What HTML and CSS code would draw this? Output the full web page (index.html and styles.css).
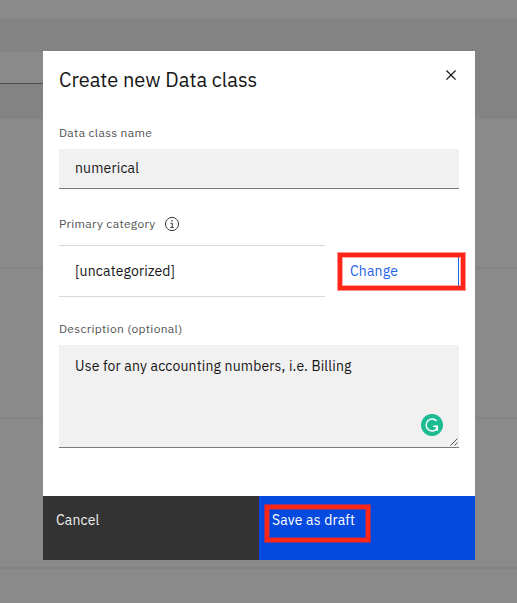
FILE: index.html
```
<!DOCTYPE html>
<html lang="en">
<head>
<meta charset="utf-8">
<title>Create new Data class</title>
<link rel="stylesheet" href="styles.css">
</head>
<body>
<div class="backdrop">
  <div class="toolbar"><div class="search"></div></div>
  <div class="row"></div>
  <div class="row"></div>
  <div class="row"></div>
</div>
<main class="modal">
  <header class="header">
    <h1 class="title">Create new Data class</h1>
    <svg class="close" viewBox="0 0 32 32"><path d="M24 9.4L22.6 8 16 14.6 9.4 8 8 9.4l6.6 6.6L8 22.6 9.4 24l6.6-6.6 6.6 6.6 1.4-1.4-6.6-6.6z"/></svg>
  </header>
  <div class="label label-name"><span>Data class name</span></div>
  <div class="input"><span class="name-value">numerical</span></div>
  <div class="label label-category"><span>Primary category</span>
    <svg class="info" viewBox="0 0 16 16"><circle cx="8" cy="8" r="6.6" fill="none" stroke="#393939" stroke-width="1"/><path d="M6.4 7.2H8.3V11.3M6.1 11.4H9.9" fill="none" stroke="#393939" stroke-width="1"/><circle cx="8" cy="4.8" r=".8" fill="#393939"/></svg>
  </div>
  <div class="category">
    <div class="category-value"><span>[uncategorized]</span></div>
    <div class="change"><span>Change</span><i class="mark mark-change"></i></div>
  </div>
  <div class="label label-desc"><span>Description (optional)</span></div>
  <div class="textarea"><span>Use for any accounting numbers, i.e. Billing</span>
    <svg class="assistant" viewBox="0 0 22 22"><circle cx="11" cy="11" r="11" fill="#1dbb92"/><path d="M15.6 7A6 6 0 1 0 15.6 15M12 12.2H16.3V16.8" fill="none" stroke="#fff" stroke-width="1.5"/><path d="M13.2 12H17v4.2z" fill="#fff"/></svg>
    <svg class="grip" viewBox="0 0 8 8"><path d="M.5 7.5l7-7M4.5 7.5l3-3" stroke="#444" stroke-width=".9"/></svg>
  </div>
  <footer class="footer">
    <div class="button cancel"><span>Cancel</span></div>
    <div class="button save"><span>Save as draft</span><i class="mark mark-save"></i></div>
  </footer>
</main>
</body>
</html>
```
FILE: styles.css
```
* { box-sizing: border-box; }
body {
  margin: 0;
  width: 517px;
  height: 603px;
  overflow: hidden;
  display: grid;
  background: #8a8a8a;
  font: 14px/18px "IBM Plex Sans", Roboto, "Liberation Sans", sans-serif;
  letter-spacing: .16px;
  color: #161616;
}
.backdrop, .modal { grid-area: 1 / 1; }
.backdrop { padding-top: 18px; }
.toolbar { height: 101px; padding-top: 34px; background: #838383; }
.search { width: 50px; height: 32px; background: #8a8a8a; border-bottom: 1px solid #4d4d4d; }
.row { height: 150px; border-bottom: 2px solid #848484; }
.modal {
  display: flex;
  flex-direction: column;
  width: 432px;
  height: 509px;
  margin: 51px 0 0 43px;
  background: #fff;
}
.header { display: flex; justify-content: space-between; height: 73px; padding: 14px 14px 0 16px; }
.title { margin: 0; font-size: 20px; line-height: 30px; font-weight: 400; letter-spacing: 0; }
.close { width: 20px; height: 20px; fill: #161616; }
.label { display: flex; align-items: center; height: 16px; margin-left: 16px; font-size: 12px; line-height: 16px; letter-spacing: .32px; color: #525252; }
.label-name { padding-top: 1px; }
.input { height: 40px; margin: 9px 16px 0; padding: 10px 16px; background: #f1f1f1; border-bottom: 1px solid #7b7b7b; }
.label-category { margin-top: 27px; gap: 8px; }
.info { width: 16px; height: 16px; }
.category { display: flex; align-items: center; justify-content: space-between; height: 52px; margin: 13px 16px 0; }
.category-value { width: 266px; height: 52px; padding: 16px; border: solid #d8d8d8; border-width: 1px 0; }
.change { position: relative; width: 121px; height: 32px; padding: 7px 11px; color: #2562ea; border-left: 1px solid #2562ea; border-right: 1px solid #2562ea; }
.label-desc { margin-top: 24px; }
.textarea { position: relative; height: 103px; margin: 8px 16px 0; padding: 12px 16px; background: #f1f1f1; border-bottom: 1px solid #7b7b7b; }
.assistant { position: absolute; right: 16px; top: 69px; width: 22px; height: 22px; }
.grip { position: absolute; right: 1px; bottom: 1px; width: 8px; height: 8px; }
.footer { display: flex; height: 64px; margin-top: auto; color: #fff; }
.button { position: relative; flex: 1; padding: 15px 13px; }
.cancel { background: #333; color: #eee; }
.save { background: #0549df; }
.mark {
  position: absolute;
  border: 4px solid #ff2617;
  box-shadow: 0 0 0 1px rgba(255, 38, 23, .5), inset 0 0 0 1px rgba(255, 38, 23, .4);
}
.mark-change { left: -1px; top: -2px; width: 127px; height: 37px; }
.mark-save { left: 6px; top: 9px; width: 105px; height: 37px; }
```
